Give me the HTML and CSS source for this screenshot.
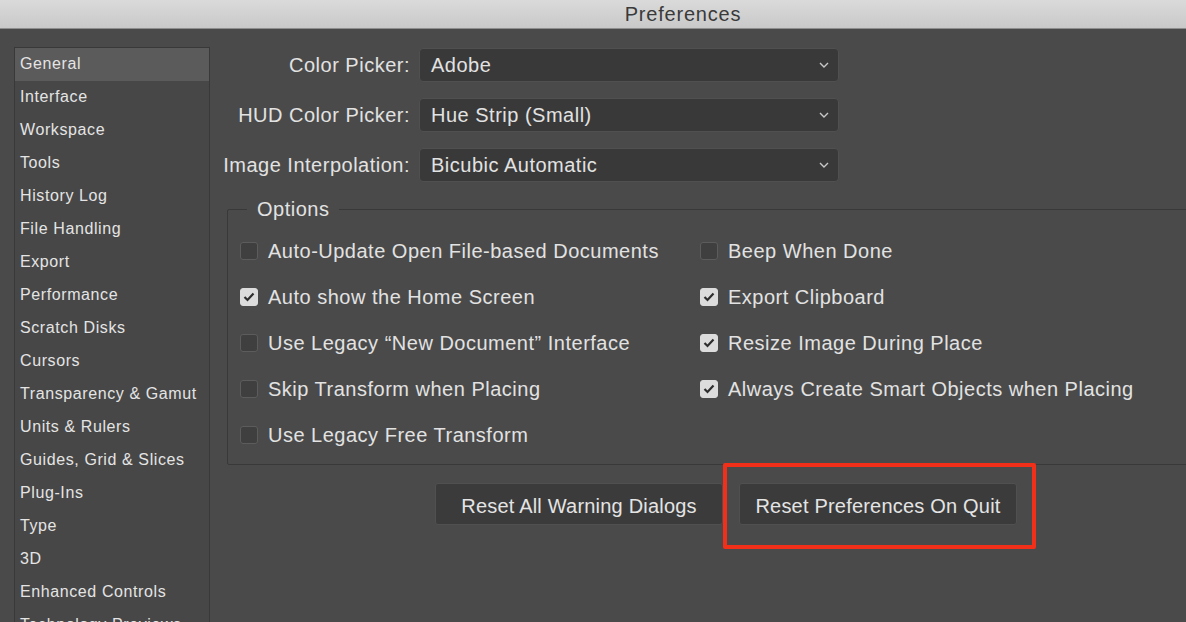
FILE: index.html
```html
<!DOCTYPE html>
<html lang="en">
<head>
    <meta charset="UTF-8">
    <title>Preferences</title>
    <link rel="stylesheet" href="styles.css">
</head>
<body>
    <div class="titlebar">Preferences</div>
    <div class="window">
        <ul class="sidebar">
            <li class="active">General</li>
            <li>Interface</li>
            <li>Workspace</li>
            <li>Tools</li>
            <li>History Log</li>
            <li>File Handling</li>
            <li>Export</li>
            <li>Performance</li>
            <li>Scratch Disks</li>
            <li>Cursors</li>
            <li>Transparency &amp; Gamut</li>
            <li>Units &amp; Rulers</li>
            <li>Guides, Grid &amp; Slices</li>
            <li>Plug-Ins</li>
            <li>Type</li>
            <li>3D</li>
            <li>Enhanced Controls</li>
            <li>Technology Previews</li>
        </ul>

        <div class="panel">
            <div class="form-grid">
                <label>Color Picker:</label>
                <div class="select">Adobe
                    <svg width="12" height="8" viewBox="0 0 12 8"><path d="M2 2l4 4 4-4" fill="none" stroke="#c8c8c8" stroke-width="1.4"/></svg>
                </div>
                <label>HUD Color Picker:</label>
                <div class="select">Hue Strip (Small)
                    <svg width="12" height="8" viewBox="0 0 12 8"><path d="M2 2l4 4 4-4" fill="none" stroke="#c8c8c8" stroke-width="1.4"/></svg>
                </div>
                <label>Image Interpolation:</label>
                <div class="select">Bicubic Automatic
                    <svg width="12" height="8" viewBox="0 0 12 8"><path d="M2 2l4 4 4-4" fill="none" stroke="#c8c8c8" stroke-width="1.4"/></svg>
                </div>
            </div>

            <fieldset class="options">
                <legend>Options</legend>
                <div class="options-grid">
                    <div class="check"><span class="box"></span>Auto-Update Open File-based Documents</div>
                    <div class="check"><span class="box"></span>Beep When Done</div>
                    <div class="check"><span class="box on"><svg width="12" height="10" viewBox="0 0 12 10"><path d="M1.5 5l3 3 6-6.5" fill="none" stroke="#2e2e2e" stroke-width="2.2"/></svg></span>Auto show the Home Screen</div>
                    <div class="check"><span class="box on"><svg width="12" height="10" viewBox="0 0 12 10"><path d="M1.5 5l3 3 6-6.5" fill="none" stroke="#2e2e2e" stroke-width="2.2"/></svg></span>Export Clipboard</div>
                    <div class="check"><span class="box"></span>Use Legacy “New Document” Interface</div>
                    <div class="check"><span class="box on"><svg width="12" height="10" viewBox="0 0 12 10"><path d="M1.5 5l3 3 6-6.5" fill="none" stroke="#2e2e2e" stroke-width="2.2"/></svg></span>Resize Image During Place</div>
                    <div class="check"><span class="box"></span>Skip Transform when Placing</div>
                    <div class="check"><span class="box on"><svg width="12" height="10" viewBox="0 0 12 10"><path d="M1.5 5l3 3 6-6.5" fill="none" stroke="#2e2e2e" stroke-width="2.2"/></svg></span>Always Create Smart Objects when Placing</div>
                    <div class="check"><span class="box"></span>Use Legacy Free Transform</div>
                </div>
            </fieldset>

            <div class="button-group">
                <button class="btn btn-warn">Reset All Warning Dialogs</button>
                <button class="btn btn-quit">Reset Preferences On Quit</button>
            </div>
        </div>
    </div>
</body>
</html>
```

FILE: styles.css
```css
body {
    margin: 0;
    height: 622px;
    overflow: hidden;
    background-color: #4a4a4a;
    color: #e2e2e2;
    font-family: "Liberation Sans", Arial, sans-serif;
}
.titlebar {
    height: 28px;
    line-height: 28px;
    padding-left: 180px;
    text-align: center;
    font-size: 20px;
    letter-spacing: 0.8px;
    color: #3a3a3a;
    background: linear-gradient(#dadada, #c9c9c9);
    border-bottom: 1px solid #8e8e8e;
}
.window {
    display: flex;
    align-items: flex-start;
}
.sidebar {
    list-style: none;
    margin: 18px 0 0 14px;
    padding: 0;
    width: 194px;
    flex-shrink: 0;
    background-color: #474747;
    border: 1px solid #393939;
}
.sidebar li {
    height: 33px;
    line-height: 32px;
    padding-left: 5px;
    font-size: 16px;
    letter-spacing: 0.6px;
    color: #e4e4e4;
    white-space: nowrap;
}
.sidebar li.active {
    background-color: #5b5b5b;
}
.panel {
    flex: 1;
    padding-top: 19px;
    font-size: 20px;
    letter-spacing: 0.5px;
}
.form-grid {
    display: grid;
    grid-template-columns: 200px 420px;
    column-gap: 9px;
    row-gap: 16px;
    align-items: center;
}
.form-grid label {
    text-align: right;
    white-space: nowrap;
}
.select {
    height: 32px;
    display: flex;
    align-items: center;
    justify-content: space-between;
    padding: 0 8px 0 11px;
    background-color: #393939;
    border: 1px solid #505050;
    border-radius: 4px;
}
.options {
    margin: 15px -40px 0 17px;
    padding: 7px 0 6px 12px;
    border: 1px solid #393939;
    border-radius: 2px;
}
.options legend {
    margin-left: 7px;
    padding: 0 10px;
    line-height: 24px;
}
.options-grid {
    display: grid;
    grid-template-columns: 460px auto;
}
.check {
    height: 46px;
    display: flex;
    align-items: center;
    gap: 10px;
    white-space: nowrap;
}
.box {
    width: 16px;
    height: 16px;
    border: 1px solid #5c5c5c;
    border-radius: 3px;
    background-color: #3f3f3f;
    display: flex;
    align-items: center;
    justify-content: center;
}
.box.on {
    background-color: #dcdcdc;
    border-color: #dcdcdc;
}
.button-group {
    display: flex;
    gap: 16px;
    margin: 18px 0 0 225px;
}
.btn {
    position: relative;
    height: 42px;
    padding: 4px 0 0;
    background-color: #3b3b3b;
    border: 1px solid #505050;
    border-radius: 3px;
    color: #e4e4e4;
    font-family: inherit;
    font-size: 20px;
    letter-spacing: 0.2px;
}
.btn-warn {
    width: 288px;
}
.btn-quit {
    width: 278px;
}
.btn-quit::after {
    content: "";
    position: absolute;
    top: -21px;
    bottom: -25px;
    left: -17px;
    right: -20px;
    border: 4px solid #f2301a;
    border-radius: 2px;
}
```
